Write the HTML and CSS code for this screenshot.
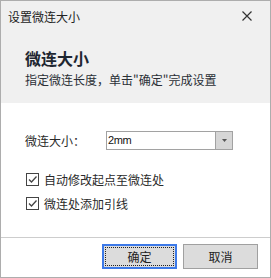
FILE: index.html
```html
<!DOCTYPE html>
<html lang="zh-CN">
<head>
    <meta charset="UTF-8">
    <title>设置微连大小</title>
    <link rel="stylesheet" href="styles.css">
</head>
<body>
    <div class="dialog">
        <div class="top">
            <div class="titlebar">
                <span class="title">设置微连大小</span>
                <svg class="close" width="10" height="10" viewBox="0 0 10 10">
                    <path d="M0.5 0.5 L9.5 9.5 M9.5 0.5 L0.5 9.5" stroke="#333" stroke-width="1.2" fill="none"/>
                </svg>
            </div>
            <div class="heading">微连大小</div>
            <div class="subtitle">指定微连长度，单击"确定"完成设置</div>
        </div>

        <div class="content">
            <div class="field">
                <span class="label">微连大小：</span>
                <div class="combo">
                    <span class="combo-value">2mm</span>
                    <span class="combo-btn">
                        <svg width="5" height="3" viewBox="0 0 5 3"><path d="M0 0 H5 L2.5 3 Z" fill="#555"/></svg>
                    </span>
                </div>
            </div>
            <label class="check">
                <span class="box">
                    <svg width="11" height="11" viewBox="0 0 11 11"><path d="M2 5.5 L4.5 8 L9.5 2.5" stroke="#444" stroke-width="1.3" fill="none"/></svg>
                </span>
                自动修改起点至微连处
            </label>
            <label class="check">
                <span class="box">
                    <svg width="11" height="11" viewBox="0 0 11 11"><path d="M2 5.5 L4.5 8 L9.5 2.5" stroke="#444" stroke-width="1.3" fill="none"/></svg>
                </span>
                微连处添加引线
            </label>
        </div>

        <div class="footer">
            <button class="btn btn-ok"><span class="focus">确定</span></button>
            <button class="btn">取消</button>
        </div>
    </div>
</body>
</html>
```

FILE: styles.css
```css
* {
    margin: 0;
    padding: 0;
    box-sizing: border-box;
}

body {
    font-family: "Noto Sans CJK SC", "Liberation Sans", sans-serif;
    font-size: 12px;
    color: #2a2a2a;
    background: #fff;
}

.dialog {
    width: 271px;
    height: 278px;
    border: 1px solid #adadad;
    background: #fff;
    display: flex;
    flex-direction: column;
}

.top {
    background: #f0f0f0;
    height: 102px;
    padding-left: 7px;
}

.titlebar {
    height: 30px;
    display: flex;
    align-items: center;
    justify-content: space-between;
    padding-right: 18px;
}

.title {
    font-size: 12px;
    color: #222;
    padding-top: 1px;
}

.close {
    margin-top: -1px;
}

.heading {
    margin-top: 17px;
    padding-left: 17px;
    font-size: 16px;
    line-height: 20px;
    font-weight: bold;
    color: #1e2630;
}

.subtitle {
    margin-top: 4px;
    padding-left: 17px;
    font-size: 12px;
    line-height: 16px;
    color: #2a2f36;
}

.content {
    flex: 1;
    padding: 28px 0 0 24px;
}

.field {
    display: flex;
    align-items: center;
    height: 19px;
    margin-bottom: 17px;
}

.label {
    width: 81px;
    line-height: 19px;
}

.combo {
    width: 127px;
    height: 19px;
    border: 1px solid #a2a2a2;
    display: flex;
    background: #fff;
}

.combo-value {
    flex: 1;
    font-family: "Liberation Sans", sans-serif;
    font-size: 11px;
    line-height: 17px;
    padding-left: 1px;
    color: #111;
    letter-spacing: -0.4px;
}

.combo-btn {
    width: 17px;
    background: #d6d6d6;
    border-left: 1px solid #a2a2a2;
    display: flex;
    align-items: center;
    justify-content: center;
}

.check {
    display: flex;
    align-items: center;
    height: 24px;
    padding-left: 1px;
    gap: 5px;
}

.box {
    width: 13px;
    height: 13px;
    border: 1px solid #444;
    background: #fff;
    display: flex;
    align-items: center;
    justify-content: center;
}

.footer {
    border-top: 1px solid #cdcdcd;
    height: 40px;
    display: flex;
    justify-content: flex-end;
    gap: 6px;
    padding: 6px 12px 0 0;
}

.btn {
    width: 75px;
    height: 25px;
    border: 1px solid #a0a0a0;
    background: #dcdcdc;
    font-family: "Noto Sans CJK SC", sans-serif;
    font-size: 12px;
    color: #222;
}

.btn-ok {
    border: 2px solid #3d7ae8;
    padding: 1px;
}

.focus {
    display: flex;
    align-items: center;
    justify-content: center;
    height: 100%;
    border: 1px dotted #222;
}
```
